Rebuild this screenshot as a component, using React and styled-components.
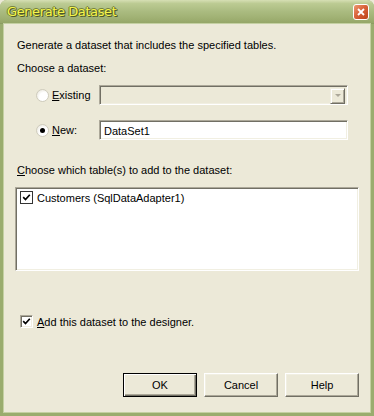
import React from 'react'
import styled, { createGlobalStyle } from 'styled-components'

const Global = createGlobalStyle`
  html, body {
    margin: 0;
    padding: 0;
    background: #ece9d8;
  }
  body {
    font-family: "Liberation Sans", Arial, sans-serif;
    font-size: 11px;
    color: #000;
  }
`

const Window = styled.div`
  width: 374px;
  height: 416px;
  display: flex;
  flex-direction: column;
  background: #ece9d8;
  box-sizing: border-box;
  overflow: hidden;
  border-radius: 7px 7px 0 0;
  background: #9aac6e;
`

const TitleBar = styled.div`
  height: 24px;
  flex: none;
  display: flex;
  align-items: center;
  justify-content: space-between;
  padding: 0 5px 0 7px;
  background: linear-gradient(#d6dfb4 0%, #bccb93 15%, #aabb80 50%, #9fb072 80%, #95a668 100%);
  border-bottom: 1px solid #8c9d62;
  box-sizing: border-box;
`

const Caption = styled.span`
  font-family: "DejaVu Sans", sans-serif;
  font-size: 13px;
  letter-spacing: -0.4px;
  color: #f5f54c;
  text-shadow: 1px 1px 0 #4f5a26, -1px 0 0 #76843f, 0 -1px 0 #76843f, 1px 0 0 #4f5a26;
`

const CloseButton = styled.div`
  width: 16px;
  height: 16px;
  border: 1px solid #fff;
  border-radius: 3px;
  background: linear-gradient(135deg, #ec9a72 0%, #d9633a 45%, #bd4419 100%);
  display: flex;
  align-items: center;
  justify-content: center;
  box-sizing: border-box;
`

const Frame = styled.div`
  flex: 1;
  display: flex;
  flex-direction: column;
  background: #ece9d8;
  margin: 0 4px 4px 4px;
  box-shadow: 0 0 0 1px #c4d0a2;
  padding: 0 11px 15px 11px;
  box-sizing: border-box;
`

const Text = styled.div`
  height: 13px;
  line-height: 13px;
  margin-left: 2px;
  margin-top: ${p => p.$top || 0}px;
  white-space: nowrap;
`

const U = styled.span`
  text-decoration: underline;
`

const OptionRow = styled.div`
  display: flex;
  align-items: center;
  height: 20px;
  margin-top: ${p => p.$top}px;
  padding-left: 21px;
`

const Radio = styled.span`
  width: 13px;
  height: 13px;
  flex: none;
  border-radius: 50%;
  box-sizing: border-box;
  border: 1px solid #cfccbd;
  background: radial-gradient(circle at 65% 65%, #ffffff 45%, #e2dfd2 100%);
  display: flex;
  align-items: center;
  justify-content: center;
  &::after {
    content: '';
    width: 5px;
    height: 5px;
    border-radius: 50%;
    background: ${p => (p.$checked ? '#000' : 'transparent')};
  }
`

const OptionLabel = styled.span`
  width: 47px;
  padding-left: 3px;
  flex: none;
`

const Field = styled.div`
  width: 249px;
  height: 20px;
  box-sizing: border-box;
  border-top: 1px solid #aca899;
  border-left: 1px solid #aca899;
  border-right: 1px solid #fff;
  border-bottom: 1px solid #fff;
  box-shadow: inset 1px 1px 0 #716f64, inset -1px -1px 0 #f1efe2;
  background: ${p => (p.$disabled ? '#ece9d8' : '#fff')};
  display: flex;
  align-items: center;
  justify-content: flex-end;
  padding: 2px 3px 0 4px;
`

const FieldText = styled.span`
  flex: 1;
`

const DropButton = styled.span`
  width: 15px;
  height: 16px;
  margin-right: -1px;
  margin-top: -1px;
  box-sizing: border-box;
  background: #ece9d8;
  border-top: 1px solid #f1efe2;
  border-left: 1px solid #f1efe2;
  border-right: 1px solid #716f64;
  border-bottom: 1px solid #716f64;
  box-shadow: inset 1px 1px 0 #fff, inset -1px -1px 0 #aca899;
  display: flex;
  align-items: center;
  justify-content: center;
  &::after {
    content: '';
    border-left: 3px solid transparent;
    border-right: 3px solid transparent;
    border-top: 3px solid #aca899;
  }
`

const ListBox = styled.div`
  height: 84px;
  margin-top: 10px;
  box-sizing: border-box;
  background: #fff;
  border-top: 1px solid #aca899;
  border-left: 1px solid #aca899;
  border-right: 1px solid #fff;
  border-bottom: 1px solid #fff;
  box-shadow: inset 1px 1px 0 #716f64, inset -1px -1px 0 #f1efe2;
  padding: 2px 0 0 4px;
`

const CheckRow = styled.div`
  display: flex;
  align-items: center;
  height: 13px;
  margin-top: ${p => p.$top || 0}px;
  padding-left: ${p => p.$indent || 0}px;
`

const Box = styled.span`
  width: 13px;
  height: 13px;
  flex: none;
  box-sizing: border-box;
  background: #fff;
  border-top: 1px solid ${p => (p.$flat ? '#333' : '#aca899')};
  border-left: 1px solid ${p => (p.$flat ? '#333' : '#aca899')};
  border-right: 1px solid ${p => (p.$flat ? '#333' : '#fff')};
  border-bottom: 1px solid ${p => (p.$flat ? '#333' : '#fff')};
  box-shadow: ${p => (p.$flat ? 'none' : 'inset 1px 1px 0 #716f64, inset -1px -1px 0 #f1efe2')};
  display: flex;
  align-items: center;
  justify-content: center;
`

const CheckLabel = styled.span`
  padding-left: ${p => p.$gap}px;
  white-space: nowrap;
`

const Buttons = styled.div`
  margin-top: auto;
  display: flex;
  justify-content: flex-end;
  gap: 7px;
`

const Button = styled.button`
  width: 74px;
  height: 24px;
  box-sizing: border-box;
  font-family: "Liberation Sans", Arial, sans-serif;
  font-size: 11px;
  color: #000;
  background: #ece9d8;
  padding: 0;
  border-top: 1px solid ${p => (p.$default ? '#000' : '#fff')};
  border-left: 1px solid ${p => (p.$default ? '#000' : '#fff')};
  border-right: 1px solid ${p => (p.$default ? '#000' : '#716f64')};
  border-bottom: 1px solid ${p => (p.$default ? '#000' : '#716f64')};
  box-shadow: ${p =>
    p.$default
      ? 'inset 1px 1px 0 #fff, inset -1px -1px 0 #716f64, inset -2px -2px 0 #aca899'
      : 'inset -1px -1px 0 #aca899, inset 1px 1px 0 #f1efe2'};
`

const Tick = () => (
  <svg width="9" height="9" viewBox="0 0 9 9">
    <path d="M1.2 4.2 L3.5 6.5 L7.8 1.8" fill="none" stroke="#000" strokeWidth="1.7" />
  </svg>
)

export default function App() {
  return (
    <>
      <Global />
      <Window>
        <TitleBar>
          <Caption>Generate Dataset</Caption>
          <CloseButton>
            <svg width="8" height="8" viewBox="0 0 8 8">
              <path d="M1 1 L7 7 M7 1 L1 7" stroke="#fff" strokeWidth="1.8" />
            </svg>
          </CloseButton>
        </TitleBar>
        <Frame>
          <Text $top={15}>Generate a dataset that includes the specified tables.</Text>
          <Text $top={10}>Choose a dataset:</Text>
          <OptionRow $top={10}>
            <Radio />
            <OptionLabel><U>E</U>xisting</OptionLabel>
            <Field $disabled>
              <DropButton />
            </Field>
          </OptionRow>
          <OptionRow $top={15}>
            <Radio $checked />
            <OptionLabel><U>N</U>ew:</OptionLabel>
            <Field>
              <FieldText>DataSet1</FieldText>
            </Field>
          </OptionRow>
          <Text $top={24}><U>C</U>hoose which table(s) to add to the dataset:</Text>
          <ListBox>
            <CheckRow $top={1}>
              <Box $flat><Tick /></Box>
              <CheckLabel $gap={4}>Customers (SqlDataAdapter1)</CheckLabel>
            </CheckRow>
          </ListBox>
          <CheckRow $top={44} $indent={5}>
            <Box><Tick /></Box>
            <CheckLabel $gap={4}><U>A</U>dd this dataset to the designer.</CheckLabel>
          </CheckRow>
          <Buttons>
            <Button $default>OK</Button>
            <Button>Cancel</Button>
            <Button>Help</Button>
          </Buttons>
        </Frame>
      </Window>
    </>
  )
}
